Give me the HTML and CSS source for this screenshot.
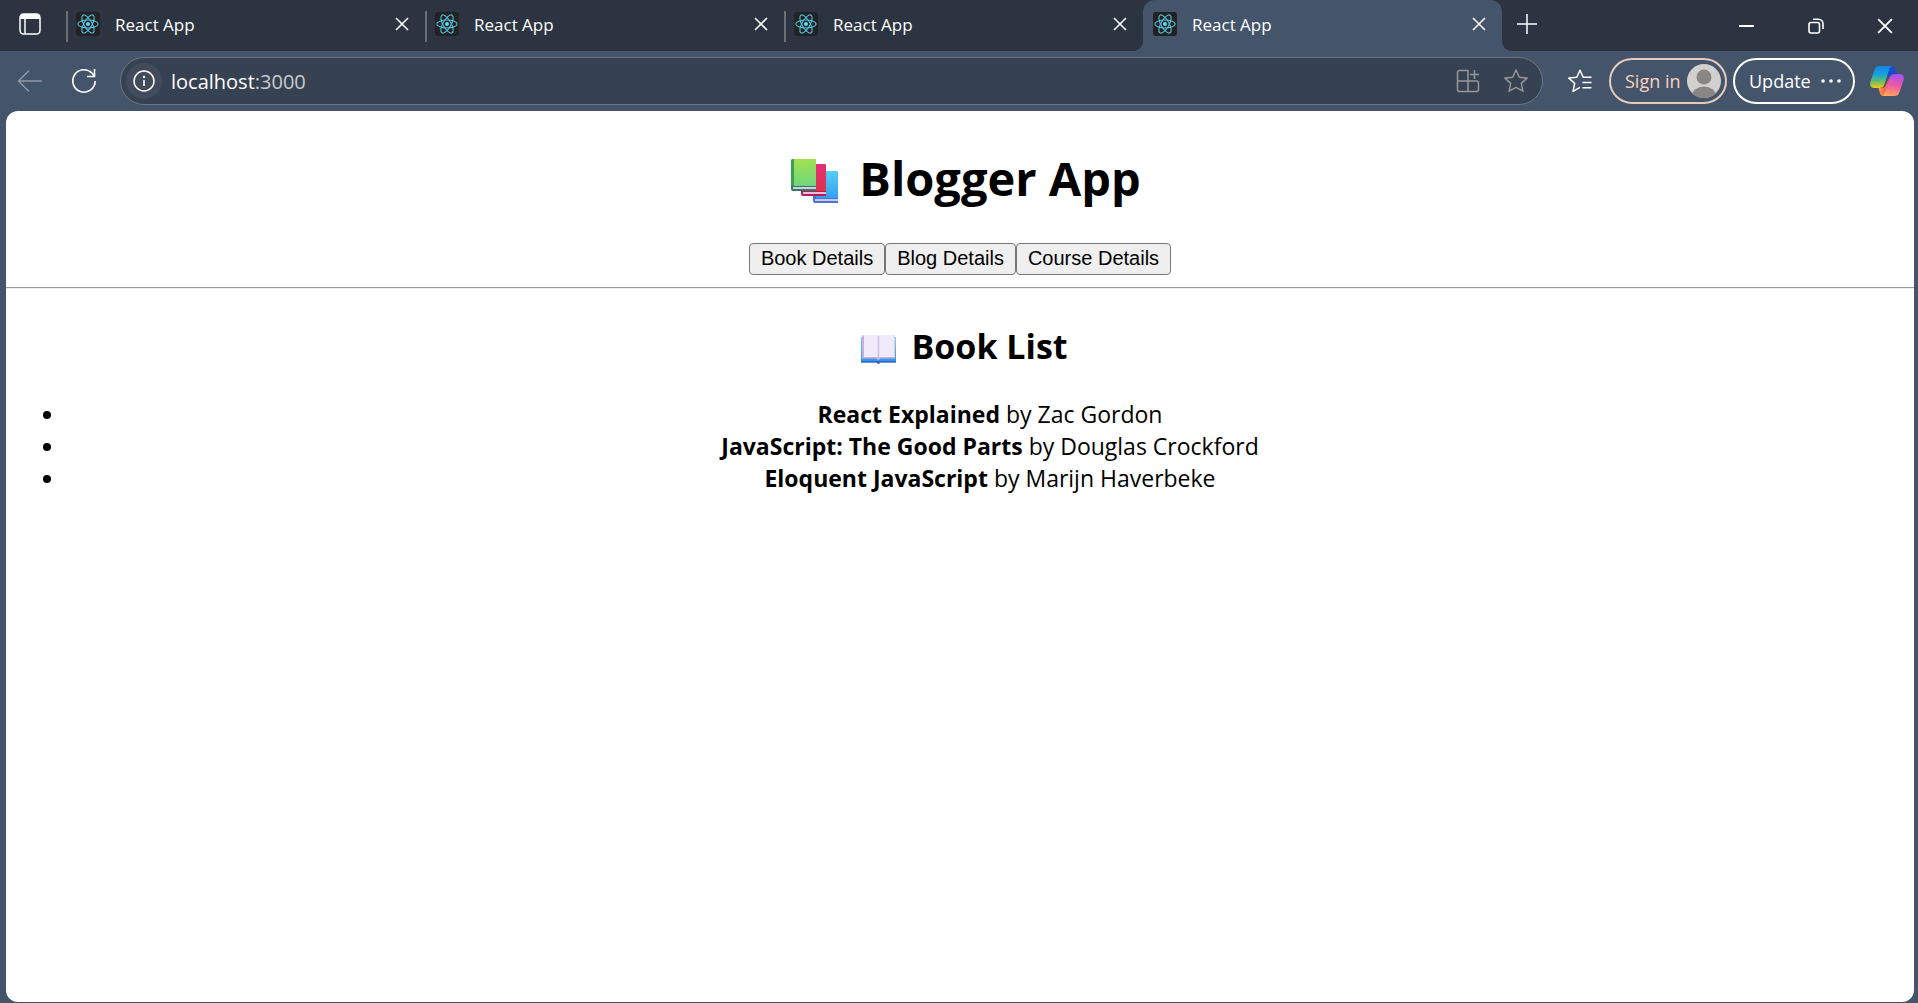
FILE: index.html
```html
<!DOCTYPE html>
<html lang="en">
<head>
<meta charset="utf-8">
<meta name="viewport" content="width=device-width, initial-scale=1">
<title>React App</title>
<link rel="stylesheet" href="styles.css">
</head>
<body>
<svg class="defs" aria-hidden="true">
  <symbol id="react" viewBox="0 0 24 24">
    <rect width="24" height="24" rx="3" fill="#222"/>
    <g fill="none" stroke="#53c1de" stroke-width="1.1">
      <ellipse cx="12" cy="12" rx="10.2" ry="4"/>
      <ellipse cx="12" cy="12" rx="10.2" ry="4" transform="rotate(60 12 12)"/>
      <ellipse cx="12" cy="12" rx="10.2" ry="4" transform="rotate(120 12 12)"/>
    </g>
    <circle cx="12" cy="12" r="2" fill="#61dafb"/>
  </symbol>
  <symbol id="close" viewBox="0 0 14 14">
    <path d="M1 1l12 12M13 1L1 13" fill="none" stroke="#fff" stroke-width="1.6"/>
  </symbol>
</svg>
<div class="browser">
  <header class="tab-strip">
    <button class="icon-button tab-actions" aria-label="Tab actions">
      <svg width="22" height="22" viewBox="0 0 22 22"><rect x="1" y="1" width="20" height="20" rx="3.5" fill="none" stroke="#fff" stroke-width="1.5"/><path d="M1 6V4a3 3 0 0 1 3-3h14a3 3 0 0 1 3 3v2z" fill="#fff"/><path d="M6 6v15" stroke="#fff" stroke-width="1.5"/></svg>
    </button>
    <nav class="tabs" aria-label="Open tabs">
      <div class="tab"><svg class="favicon"><use href="#react"/></svg><span class="tab-title">React App</span><button class="icon-button" aria-label="Close tab"><svg width="14" height="14"><use href="#close"/></svg></button></div>
      <div class="tab"><svg class="favicon"><use href="#react"/></svg><span class="tab-title">React App</span><button class="icon-button" aria-label="Close tab"><svg width="14" height="14"><use href="#close"/></svg></button></div>
      <div class="tab"><svg class="favicon"><use href="#react"/></svg><span class="tab-title">React App</span><button class="icon-button" aria-label="Close tab"><svg width="14" height="14"><use href="#close"/></svg></button></div>
      <div class="tab active"><svg class="favicon"><use href="#react"/></svg><span class="tab-title">React App</span><button class="icon-button" aria-label="Close tab"><svg width="14" height="14"><use href="#close"/></svg></button></div>
    </nav>
    <button class="icon-button new-tab" aria-label="New tab">
      <svg width="22" height="22" viewBox="0 0 22 22"><path d="M11 1v20M1 11h20" stroke="#fff" stroke-width="1.5"/></svg>
    </button>
    <div class="window-controls">
      <button class="icon-button" aria-label="Minimize"><svg width="16" height="16" viewBox="0 0 16 16"><path d="M0 8h15" stroke="#fff" stroke-width="2"/></svg></button>
      <button class="icon-button" aria-label="Restore"><svg width="16" height="16" viewBox="0 0 16 16"><g fill="none" stroke="#fff" stroke-width="1.6"><rect x="1" y="4.500" width="10.500" height="10.500" rx="2"/><path d="M5 1.200h5.500a4.500 4.500 0 0 1 4.500 4.500V11"/></g></svg></button>
      <button class="icon-button" aria-label="Close window"><svg width="16" height="16" viewBox="0 0 14 14"><use href="#close"/></svg></button>
    </div>
  </header>
  <div class="toolbar">
    <button class="icon-button nav-button" aria-label="Back"><svg width="26" height="24" viewBox="0 0 26 24"><path d="M25 12H2M12 1.500L1.500 12 12 22.500" fill="none" stroke="#8f99a6" stroke-width="1.4"/></svg></button>
    <button class="icon-button nav-button" aria-label="Refresh"><svg width="26" height="26" viewBox="0 0 26 26"><path d="M24.200 13a11.200 11.200 0 1 1-3.200-7.900L23.300 8M23.500 1v7.500H16" fill="none" stroke="#fff" stroke-width="1.600"/></svg></button>
    <form class="address">
      <button type="button" class="icon-button site-info" aria-label="Site information"><svg width="22" height="22" viewBox="0 0 22 22"><circle cx="11" cy="11" r="10" fill="none" stroke="#fff" stroke-width="1.500"/><path d="M11 10v6" stroke="#fff" stroke-width="1.600"/><circle cx="11" cy="7" r="1.200" fill="#fff"/></svg></button>
      <div class="url" role="textbox" tabindex="0" aria-label="Address">localhost<span class="port">:3000</span></div>
      <button type="button" class="icon-button address-action" aria-label="Install app"><svg width="24" height="24" viewBox="0 0 24 24"><path d="M12 12H1.500V3.500a2 2 0 0 1 2-2H12zM1.500 12v8.500a2 2 0 0 0 2 2H12V12zM12 12h8.500a2 2 0 0 1 2 2v6.500a2 2 0 0 1-2 2H12zM18.500 1v9M14 5.500h9" fill="none" stroke="#969696" stroke-width="1.500"/></svg></button>
      <button type="button" class="icon-button address-action" aria-label="Add to favorites"><svg width="26" height="26" viewBox="0 0 26 26"><path d="M13 2l3.300 7.200 7.700.9-5.700 5.300 1.600 7.800L13 19.400l-6.900 3.800 1.600-7.800L2 10.100l7.700-.9z" fill="none" stroke="#969696" stroke-width="1.500" stroke-linejoin="round"/></svg></button>
    </form>
    <button class="icon-button favorites" aria-label="Favorites"><svg width="26" height="26" viewBox="0 0 26 26"><path d="M24.500 9.200h-8.300L13 2.200 9.800 9.200l-8 .9 5.900 5.300-1.700 8L13 19.300M15.500 14.500h9M15.500 19.800h9" fill="none" stroke="#fff" stroke-width="1.500" stroke-linejoin="round"/></svg></button>
    <div class="profile-actions">
      <button class="pill sign-in">Sign in<svg width="34" height="34" viewBox="0 0 34 34"><clipPath id="avatar"><circle cx="17" cy="17" r="17"/></clipPath><g clip-path="url(#avatar)"><path d="M0 0h34v34H0z" fill="#d2d0ce"/><circle cx="17" cy="13" r="7.500" fill="#8a8683"/><ellipse cx="17" cy="32" rx="12" ry="9.500" fill="#8a8683"/></g></svg></button>
      <button class="pill update">Update<svg width="20" height="6" viewBox="0 0 20 6" fill="#fff"><circle cx="2" cy="3" r="1.800"/><circle cx="10" cy="3" r="1.800"/><circle cx="18" cy="3" r="1.800"/></svg></button>
    </div>
    <button class="icon-button" aria-label="Copilot"><svg width="34" height="32" viewBox="0 0 34 32">
      <defs>
        <linearGradient id="c1" x1="0" y1="0" x2="0" y2="1"><stop offset="0" stop-color="#1684e8"/><stop offset=".4" stop-color="#15a5df"/><stop offset=".7" stop-color="#68bd65"/><stop offset="1" stop-color="#f2ca13"/></linearGradient>
        <linearGradient id="c2" x1=".5" y1="0" x2=".3" y2="1"><stop offset="0" stop-color="#a74ff0"/><stop offset=".5" stop-color="#ef5aa0"/><stop offset="1" stop-color="#ffa95e"/></linearGradient>
        <linearGradient id="c3" x1="0" y1="0" x2="1" y2="0"><stop offset="0" stop-color="#fca044"/><stop offset="1" stop-color="#ef3e55"/></linearGradient>
      </defs>
      <path d="M16 1h5c3 0 4 2 4.800 5l.8 3h-3c-3 0-4 1-5 4z" fill="#194bd0"/>
      <path d="M18 31h-4c-3 0-4-2-4.500-4.500L8.500 23H11c3 0 4-1 5-4l3-6z" fill="url(#c3)"/>
      <path d="M10 1h13c-2 0-3 1.500-4 4l-4.500 14c-1 3-2.500 4-5 4H4c-3.500 0-4.500-3-3.500-6.500L4.500 5C5.500 2 7 1 10 1z" fill="url(#c1)"/>
      <path d="M24 31H11c2 0 3-1.500 4-4l4.500-14c1-3 2.500-4 5-4H30c3.500 0 4.500 3 3.500 6.500L29.500 27c-1 3-2.500 4-5.500 4z" fill="url(#c2)"/>
    </svg></button>
  </div>
  <main class="page">
    <h1 class="page-title">
      <svg class="title-icon" viewBox="-3 -3 66 48" role="img" aria-label="Books">
        <defs>
          <linearGradient id="green" x1="0" y1="0" x2="0" y2="1"><stop offset="0" stop-color="#a3e04f"/><stop offset="1" stop-color="#6fd67f"/></linearGradient>
          <linearGradient id="red" x1="0" y1="0" x2="0" y2="1"><stop offset="0" stop-color="#e52d78"/><stop offset="1" stop-color="#dc3348"/></linearGradient>
          <linearGradient id="blue" x1="0" y1="0" x2="0" y2="1"><stop offset="0" stop-color="#55cff6"/><stop offset="1" stop-color="#379ff0"/></linearGradient>
        </defs>
        <path d="M31 14h23a2 2 0 0 1 2 2v30H33a2 2 0 0 1-2-2z" fill="#4377d5"/><path d="M34 14h20a2 2 0 0 1 2 2v25H34z" fill="url(#blue)"/><path d="M33 42h23v2H33z" fill="#d4c3f4"/>
        <path d="M19 7h23a2 2 0 0 1 2 2v30H21a2 2 0 0 1-2-2z" fill="#b41e50"/><path d="M22 7h20a2 2 0 0 1 2 2v25H22z" fill="url(#red)"/><path d="M21 35h23v2H21z" fill="#e6bdea"/>
        <path d="M9 4a2 2 0 0 1 2-2h21a2 2 0 0 1 2 2v30H11a2 2 0 0 1-2-2z" fill="#35795f"/><path d="M12 2h20a2 2 0 0 1 2 2v25H12z" fill="url(#green)"/><path d="M9 4a2 2 0 0 1 2-2h1v27H9z" fill="#3b9e54"/><path d="M11 30h23v2H11z" fill="#d7c9ef"/>
      </svg>
      Blogger App
    </h1>
    <div class="page-nav">
      <button class="page-button">Book Details</button><button class="page-button">Blog Details</button><button class="page-button">Course Details</button>
    </div>
    <hr class="divider">
    <h2 class="section-title">
      <svg class="section-icon" viewBox="-2 -3 49 36" role="img" aria-label="Open book">
        <defs><linearGradient id="cover" x1="0" y1="0" x2="0" y2="1"><stop offset="0" stop-color="#7bd4f3"/><stop offset="1" stop-color="#2f8de4"/></linearGradient></defs>
        <path d="M7 6h35v25.500H26.500l-2 1.500-2-1.500H7z" fill="url(#cover)"/><path d="M7 30h35v1.500H26.500l-2 1.500-2-1.500H7z" fill="#2e68c8"/>
        <path d="M8 6q0-2 2-2h12q2.500 0 2.500 2Q24.500 4 27 4h12q2 0 2 2v21.500H26.500l-2 2-2-2H8z" fill="#c6b4d8"/>
        <path d="M10 4h12q2.500 0 2.500 2Q24.500 4 27 4h12q1.500 0 1.500 2v20H27q-2 0-2.500 1-.5-1-2.500-1H10z" fill="#f0eafa"/><path d="M24.500 5v22" stroke="#cfc2e2" stroke-width="1.500"/>
      </svg>
      Book List
    </h2>
    <ul class="book-list">
      <li><strong>React Explained</strong> by Zac Gordon</li>
      <li><strong>JavaScript: The Good Parts</strong> by Douglas Crockford</li>
      <li><strong>Eloquent JavaScript</strong> by Marijn Haverbeke</li>
    </ul>
  </main>
</div>
</body>
</html>
```
FILE: styles.css
```css
* {
  box-sizing: border-box;
}

body {
  margin: 0;
  font-family: "Open Sans", "Noto Sans", sans-serif;
  background: #44546a;
}

svg {
  display: block;
  flex: none;
  overflow: visible;
}

.defs {
  position: absolute;
  width: 0;
  height: 0;
}

.browser {
  display: flex;
  flex-direction: column;
  min-height: 100vh;
}

.icon-button {
  display: flex;
  align-items: center;
  justify-content: center;
  flex: none;
  padding: 0;
  border: 0;
  background: none;
}

.tab-strip {
  display: flex;
  height: 51px;
  background: #2b3440;
}

.tab-actions {
  width: 60px;
  height: 48px;
  margin-right: 6px;
}

.tabs {
  display: flex;
  flex: 0 1 1436px;
  min-width: 0;
}

.tab {
  position: relative;
  display: flex;
  align-items: center;
  flex: 1 1 0;
  min-width: 0;
  padding: 0 16px 3px 10px;
  color: #fff;
  font-size: 17px;
}

.tab:not(.active)::before {
  content: "";
  position: absolute;
  left: 0;
  top: 11px;
  width: 2px;
  height: 31px;
  background: #67707a;
}

.tab.active {
  border-radius: 12px 12px 0 0;
  background: #44546a;
}

.tab.active::before,
.tab.active::after {
  content: "";
  position: absolute;
  bottom: 0;
  width: 10px;
  height: 10px;
}

.tab.active::before {
  right: 100%;
  background: radial-gradient(circle at 0 0, transparent 10px, #44546a 10px);
}

.tab.active::after {
  left: 100%;
  background: radial-gradient(circle at 100% 0, transparent 10px, #44546a 10px);
}

.favicon {
  width: 24px;
  height: 24px;
}

.tab-title {
  flex: 1;
  margin-left: 15px;
}

.new-tab {
  width: 50px;
  height: 47px;
}

.window-controls {
  display: flex;
  margin-left: auto;
}

.window-controls .icon-button {
  width: 69px;
  padding-left: 2px;
}

.toolbar {
  display: flex;
  align-items: center;
  height: 60px;
  padding: 0 14px 0 3px;
}

.nav-button {
  width: 54px;
  height: 48px;
}

.address {
  display: flex;
  align-items: center;
  flex: 1;
  min-width: 0;
  height: 48px;
  margin-left: 9px;
  padding: 0 2px 0 5px;
  border: 1px solid #6c7682;
  border-radius: 24px;
  background: #364252;
}

.site-info {
  width: 36px;
  height: 36px;
  border-radius: 50%;
  background: #414b5b;
}

.url {
  flex: 1;
  min-width: 0;
  margin-left: 9px;
  color: #fff;
  font-size: 20px;
}

.port {
  color: #c7cbd0;
}

.address-action {
  width: 48px;
  height: 40px;
}

.favorites {
  width: 66px;
  padding-left: 8px;
}

.profile-actions {
  display: flex;
  gap: 6px;
  margin-right: 15px;
}

.pill {
  display: flex;
  align-items: center;
  justify-content: space-between;
  height: 46px;
  padding: 0 12px 0 14px;
  border: 2px solid #fff;
  border-radius: 23px;
  background: none;
  color: #fff;
  font-family: inherit;
  font-size: 18px;
  white-space: nowrap;
}

.sign-in {
  width: 118px;
  padding-right: 4px;
  border-color: #e8cabb;
  color: #f9d3bd;
}

.update {
  width: 122px;
}

.page {
  flex: 1;
  margin: 0 4px 1px 6px;
  border-radius: 12px;
  background: #fff;
  color: #000;
  text-align: center;
  font-size: 23px;
  line-height: 32px;
}

.page-title,
.section-title {
  display: flex;
  align-items: center;
  justify-content: center;
}

.page-title {
  gap: 14px;
  margin: 33px 0 31px;
  font-size: 47px;
  line-height: 68px;
}

.title-icon {
  width: 66px;
  height: 48px;
}

.page-nav {
  display: flex;
  justify-content: center;
}

.page-button {
  height: 32px;
  padding: 0 11px 2px;
  border: 1px solid #767676;
  border-radius: 4px;
  background: #efefef;
  color: #000;
  font-family: "Liberation Sans", Arial, sans-serif;
  font-size: 20px;
}

.divider {
  height: 2px;
  margin: 12px 0 33px;
  border: 0;
  border-top: 1px solid #9a9a9a;
  border-bottom: 1px solid #eee;
}

.section-title {
  gap: 10px;
  margin: 0 0 28px;
  font-size: 34px;
  line-height: 48px;
}

.section-icon {
  width: 49px;
  height: 36px;
}

.book-list {
  margin: 0;
  padding-left: 60px;
}
```
